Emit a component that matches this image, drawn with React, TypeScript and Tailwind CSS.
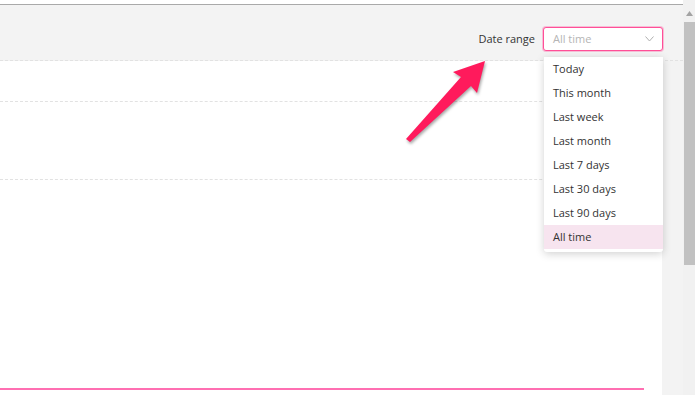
import React from "react";

const items = [
  "Today",
  "This month",
  "Last week",
  "Last month",
  "Last 7 days",
  "Last 30 days",
  "Last 90 days",
  "All time",
];

export default function App() {
  return (
    <div
      className="relative w-[695px] h-[395px] overflow-hidden bg-white flex"
      style={{ fontFamily: '"Open Sans", "Noto Sans", sans-serif' }}
    >
      <div className="flex-1 flex flex-col">
        <div className="h-[4px] bg-white" />
        <div className="h-[57px] bg-[#f3f3f3] border-t border-[#a9a9a9] border-b border-b-[#e2e2e2] border-dashed flex items-end justify-end pr-[20px] pb-[9px] gap-[8px]" style={{ borderTopStyle: "solid" }}>
          <span className="text-[11px] text-[#333] h-[24px] flex items-center">Date range</span>
          <div className="w-[120px] h-[24px] rounded-[3px] border border-[#ff4f97] shadow-[0_0_0_1px_rgba(255,90,160,0.35)] bg-white flex items-center justify-between pl-[9px] pr-[8px]">
            <span className="text-[11px] text-[#b5b5b5]">All time</span>
            <svg width="9" height="6" viewBox="0 0 9 6" fill="none">
              <path d="M0.5 0.5 L4.5 5 L8.5 0.5" stroke="#b0b0b0" strokeWidth="1" />
            </svg>
          </div>
        </div>
        <div className="flex-1 flex">
          <div className="w-[662px] flex flex-col bg-white">
            <div className="h-[41px] border-b border-dashed border-[#e2e2e2] flex items-center justify-end pr-[10px]">
              <div className="w-[60px] h-[28px] rounded-[3px] border border-[#dedede]" />
            </div>
            <div className="h-[78px] border-b border-dashed border-[#e2e2e2]" />
            <div className="flex-1 flex flex-col justify-end pb-[5px]">
              <div className="w-[644px] h-[2px] bg-[#ff6fb2]" />
            </div>
          </div>
          <div className="flex-1 bg-[#f3f3f3]" />
        </div>
      </div>
      <div className="w-[12px] bg-[#f1f1f1] flex flex-col items-center">
        <div className="h-[5px]" />
        <div className="h-[17px] flex items-center justify-center">
          <svg width="7" height="5" viewBox="0 0 7 5">
            <path d="M0 5 L3.5 0 L7 5 Z" fill="#a3a3a3" />
          </svg>
        </div>
        <div className="w-[11px] h-[243px] bg-[#c1c1c1] self-end" />
      </div>

      {/* dropdown menu */}
      <div className="absolute left-[544px] top-[57px] w-[119px] bg-white rounded-b-[3px] shadow-[0_2px_8px_rgba(0,0,0,0.18)]">
        {items.map((it) => (
          <div
            key={it}
            className={
              "h-[24px] flex items-center pl-[9px] text-[11px] text-[#333] " +
              (it === "All time" ? "bg-[#f7e4ef]" : "")
            }
          >
            {it}
          </div>
        ))}
        <div className="h-[3px]" />
      </div>

      {/* arrow annotation */}
      <svg
        className="absolute left-0 top-0"
        width="695"
        height="395"
        viewBox="0 0 695 395"
        style={{ filter: "drop-shadow(1px 2px 1.5px rgba(0,0,0,0.35))" }}
      >
        <polygon
          points="406,139 461,77 453,72 485,61 477,93 471,86 410,142"
          fill="#ff1a5c"
        />
      </svg>
    </div>
  );
}
